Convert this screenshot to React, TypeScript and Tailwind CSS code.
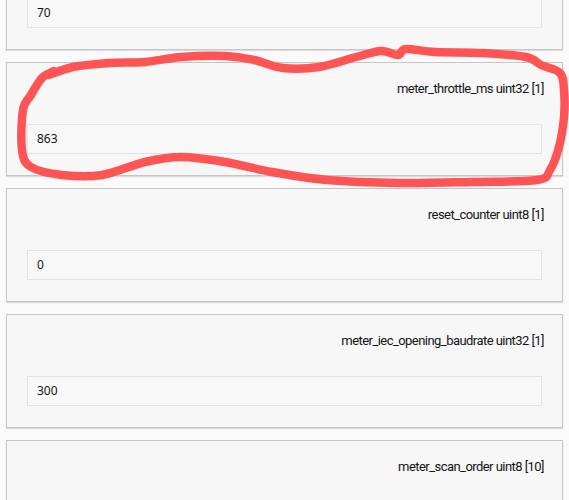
import React from 'react'

type Field = { name: string; type: string; size: number; value: string }

const fields: Field[] = [
  { name: 'meter_retry_count', type: 'uint8', size: 1, value: '70' },
  { name: 'meter_throttle_ms', type: 'uint32', size: 1, value: '863' },
  { name: 'reset_counter', type: 'uint8', size: 1, value: '0' },
  { name: 'meter_iec_opening_baudrate', type: 'uint32', size: 1, value: '300' },
  { name: 'meter_scan_order', type: 'uint8', size: 10, value: '1,2,3,4,5,6,7,8,9,10' },
]

// hand drawn marker loop around the throttle card
const loop: [number, number][] = [
  [49, 75], [73, 67], [109, 63], [145, 62], [181, 57], [225, 56], [254, 60], [283, 68],
  [319, 67], [356, 57], [381, 51], [398, 55], [406, 49], [435, 52], [483, 53], [526, 57],
  [541, 65], [560, 73], [564, 90], [564, 117], [559, 147], [550, 170], [537, 180],
  [472, 182], [399, 183], [327, 180], [272, 172], [225, 162], [181, 157], [145, 162],
  [102, 175], [62, 175], [31, 167], [22, 150], [23, 110], [31, 95], [42, 78], [54, 71],
]

function smoothPath(pts: [number, number][]) {
  let d = `M${pts[0][0]},${pts[0][1]}`
  for (let i = 0; i < pts.length - 1; i++) {
    const p0 = pts[i - 1] || pts[i]
    const p1 = pts[i]
    const p2 = pts[i + 1]
    const p3 = pts[i + 2] || p2
    const c1x = p1[0] + (p2[0] - p0[0]) / 6
    const c1y = p1[1] + (p2[1] - p0[1]) / 6
    const c2x = p2[0] - (p3[0] - p1[0]) / 6
    const c2y = p2[1] - (p3[1] - p1[1]) / 6
    d += ` C${c1x},${c1y} ${c2x},${c2y} ${p2[0]},${p2[1]}`
  }
  return d
}

function FieldCard({ field }: { field: Field }) {
  return (
    <div className="border border-[#c6c6c6] bg-[#f7f7f7] shadow-[0_1px_1px_rgba(0,0,0,0.12)] pt-[17px] pb-[21px] px-[20px]">
      <div className="text-right -mr-[2px] text-[13px] leading-[18px] tracking-[-0.55px] text-[#141414] font-['Roboto',sans-serif]">
        {field.name} {field.type} [{field.size}]
      </div>
      <div className="mt-[26px] h-[30px] border border-[#e2e2e2] bg-[#f8f8f8] flex items-center pl-[9px] text-[12px] text-[#141414] font-['Noto_Sans',sans-serif]">
        {field.value}
      </div>
    </div>
  )
}

export default function App() {
  return (
    <div className="relative w-[569px] h-[500px] overflow-hidden bg-[#fafafa]">
      <div className="-mt-[64px] px-[6px] flex flex-col gap-[12px]">
        {fields.map((f) => (
          <FieldCard key={f.name} field={f} />
        ))}
      </div>
      <svg className="absolute inset-0 pointer-events-none" width="569" height="500" viewBox="0 0 569 500">
        <path
          d={smoothPath(loop)}
          fill="none"
          stroke="#fe5454"
          strokeWidth="8.5"
          strokeLinecap="round"
          strokeLinejoin="round"
        />
      </svg>
    </div>
  )
}
